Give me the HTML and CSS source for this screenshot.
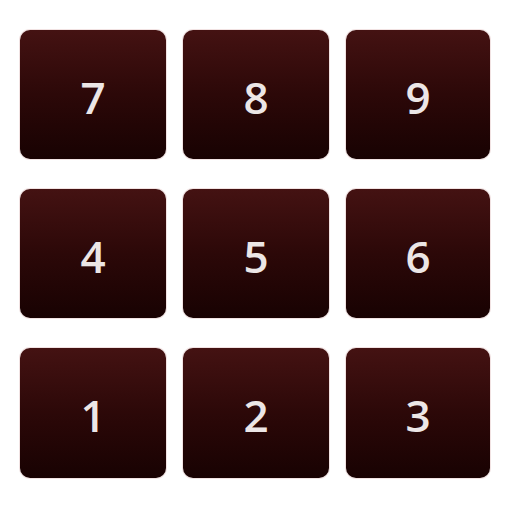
FILE: index.html
```html
<!DOCTYPE html>
<html>
<head>
<meta charset="utf-8">
<link rel="stylesheet" href="styles.css">
</head>
<body>
<div class="pad">
  <div class="key">7</div>
  <div class="key">8</div>
  <div class="key">9</div>
  <div class="key">4</div>
  <div class="key">5</div>
  <div class="key">6</div>
  <div class="key">1</div>
  <div class="key">2</div>
  <div class="key">3</div>
</div>
</body>
</html>
```
FILE: styles.css
```css
html, body {
  margin: 0;
  padding: 0;
  background: #ffffff;
  width: 512px;
  height: 512px;
  overflow: hidden;
}
.pad {
  display: grid;
  grid-template-columns: 146px 146px 144px;
  grid-template-rows: 129px 129px 130px;
  column-gap: 17px;
  row-gap: 30px;
  padding: 30px 0 0 20px;
}
.key {
  border-radius: 10px;
  background: linear-gradient(to bottom, #441212 0%, #2c0808 50%, #180202 100%);
  box-shadow: 0 0 0 1px rgba(200, 140, 140, 0.25);
  color: #ece6e6;
  font-family: "Open Sans", "DejaVu Sans", sans-serif;
  font-size: 44px;
  font-weight: 600;
  display: flex;
  align-items: center;
  justify-content: center;
  padding-top: 4px;
  box-sizing: border-box;
}
```
